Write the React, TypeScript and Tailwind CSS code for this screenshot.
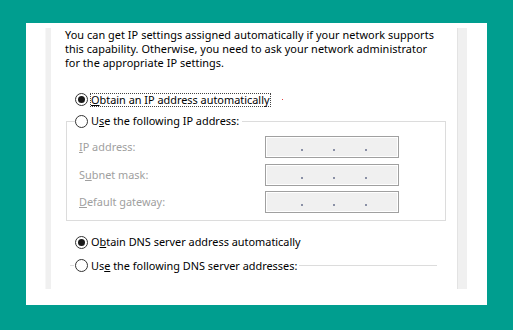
import React from "react";

function Radio({ checked }: { checked?: boolean }) {
  return (
    <span className="w-[13px] h-[13px] rounded-full border border-[#333333] bg-white flex items-center justify-center shrink-0">
      {checked && <span className="w-[7px] h-[7px] rounded-full bg-[#1a1a1a]" />}
    </span>
  );
}

function IpBox() {
  return (
    <div className="w-[134px] h-[22px] border border-[#a0a0a0] bg-[#f0f0f0] shadow-[inset_0_0_0_1px_#ffffff] flex items-center pl-[35px] pt-[6px] gap-[30px]">
      <span className="w-[2px] h-[2px] bg-[#8a90a6]" />
      <span className="w-[2px] h-[2px] bg-[#8a90a6]" />
      <span className="w-[2px] h-[2px] bg-[#8a90a6]" />
    </div>
  );
}

export default function App() {
  return (
    <div className="w-[513px] h-[330px] bg-[#009e8f] pt-[23px] pl-[26px] font-['Noto_Sans',sans-serif] text-[10.9px] leading-[14px] text-black">
      <div className="w-[461px] h-[282px] bg-white flex pt-[5px]">
        <div className="w-[19px] shrink-0" />
        <div className="w-[6px] h-[261px] shrink-0 bg-[#f0f0f0] border-l border-[#f7f7f7]" />
        <div className="w-[406px] h-[261px] shrink-0 overflow-hidden pl-[14px] flex flex-col">
          <p className="w-[390px] whitespace-nowrap tracking-[0.05px]">
            You can get IP settings assigned automatically if your network supports
            <br />
            this capability. Otherwise, you need to ask your network administrator
            <br />
            for the appropriate IP settings.
          </p>

          <div className="mt-[22px] h-[15px] flex items-center pl-[10px]">
            <Radio checked />
            <span className="ml-[2px] border border-dotted border-[#444] px-0 leading-[12px]">
              <u className="underline-offset-[1px]">O</u>btain an IP address automatically
            </span>
            <span className="ml-[11px] w-px h-px bg-[#e04040]" />
          </div>

          <fieldset className="mt-[6px] ml-[1px] w-[380px] border border-[#dcdcdc] pb-[7px]">
            <legend className="ml-[8px] pr-[3px] h-[16px] flex items-center">
              <Radio />
              <span className="ml-[3px]">
                U<u className="underline-offset-[1px]">s</u>e the following IP address:
              </span>
            </legend>
            <div className="pl-[12px] pt-[7px] flex flex-col gap-[5.5px] text-[#a0a0a0]">
              <div className="flex items-center justify-between pr-[46px]">
                <span><u className="underline-offset-[1px]">I</u>P address:</span>
                <IpBox />
              </div>
              <div className="flex items-center justify-between pr-[46px]">
                <span>S<u className="underline-offset-[1px]">u</u>bnet mask:</span>
                <IpBox />
              </div>
              <div className="flex items-center justify-between pr-[46px]">
                <span><u className="underline-offset-[1px]">D</u>efault gateway:</span>
                <IpBox />
              </div>
            </div>
          </fieldset>

          <div className="mt-[13.5px] h-[15px] flex items-center pl-[10px]">
            <Radio checked />
            <span className="ml-[3px]">
              O<u className="underline-offset-[1px]">b</u>tain DNS server address automatically
            </span>
          </div>

          <div className="mt-[8.5px] h-[15px] w-[372px] flex items-center">
            <span className="ml-[5px] w-[4px] h-px bg-[#dcdcdc]" />
            <span className="ml-px"><Radio /></span>
            <span className="ml-[3px]">
              Us<u className="underline-offset-[1px]">e</u> the following DNS server addresses:
            </span>
            <span className="ml-[2px] flex-1 h-px bg-[#dcdcdc]" />
          </div>
        </div>
        <div className="w-[10px] h-[261px] shrink-0 bg-[#f0f0f0] border-l border-[#e3e3e3]" />
      </div>
    </div>
  );
}
